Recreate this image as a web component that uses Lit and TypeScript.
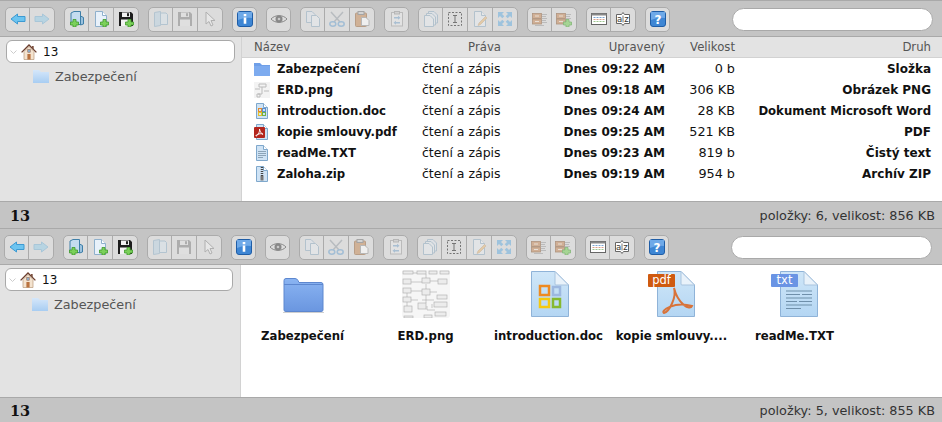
import { LitElement, html, svg, css, TemplateResult } from 'lit'
import { customElement, property } from 'lit/decorators.js'

const page = (fill = '#e8f1fa', line = '#8fb0cc') => svg`
  <path d="M2.500 .5H9.500L13.500 4.500V15.500H2.500Z" fill=${fill} stroke=${line} />
  <path d="M9.500 .5V4.500H13.500" fill="#fff" stroke=${line} />
`
const plus = svg`
  <path d="M10 8.500h3v2.500h2.500v3H13v2h-3v-2H7.500v-3H10Z" fill="#7bd05a" stroke="#3f9a2c" stroke-width=".8" />
`
const floppy = (body: string, label: string) => svg`
  <path d="M1 1H13L15 3V15H1Z" fill=${body} />
  <rect x="4" y="1.500" width="8" height="4.500" fill=${label} />
  <rect x="9" y="2.200" width="2" height="3" fill=${body} />
  <rect x="3" y="8.500" width="10" height="6.500" fill=${label} />
`
const cabinet = svg`
  <rect x=".5" y="2.500" width="9" height="5" fill="#c68a5b" stroke="#8a5a34" stroke-width=".8" />
  <rect x=".5" y="8" width="9" height="5" fill="#c68a5b" stroke="#8a5a34" stroke-width=".8" />
  <path d="M3 5h4M3 10.500h4" stroke="#f3e2d2" />
`

const toolIcons: Record<string, TemplateResult> = {
  back: svg`<path d="M1 8L7.500 3V5.500H15V10.500H7.500V13Z" fill="#6cc4f0" stroke="#3d9ad2" />`,
  forward: svg`<path d="M15 8L8.500 3V5.500H1V10.500H8.500V13Z" fill="#6cc4f0" stroke="#3d9ad2" />`,
  mkdir: svg`
    <path d="M2 2L5 .5H11.500V13.500H2Z" fill="#c4dcf0" stroke="#3f7fa8" />
    <path d="M11.500 5L14.500 6.500V13L11.500 14Z" fill="#9cc2de" stroke="#3f7fa8" />
    <g transform="translate(-6 0)">${plus}</g>
  `,
  mkfile: svg`${page()}${plus}`,
  save: svg`${floppy('#1d1d1d', '#f2f2f2')}${plus}`,
  open: svg`
    <path d="M1.500 1.500L7.500 .5V14.500L1.500 15.500Z" fill="#a8cce6" stroke="#5d92b8" />
    <path d="M7.500 2H13L14.500 3.500V13.500H7.500Z" fill="#d6e8f5" stroke="#5d92b8" />
  `,
  floppy: svg`${floppy('#4c4c4c', '#e8e8e8')}`,
  cursor: svg`<path d="M4 1V13L7 10.500L9 15L11 14L9 9.500H13Z" fill="#fff" stroke="#555" />`,
  info: svg`
    <rect x=".5" y=".5" width="15" height="15" rx="2.500" fill="#3e86d4" stroke="#1f5da6" />
    <path d="M1 1H15V7Q8 6 1 9Z" fill="#6ea9e8" />
    <path d="M6.700 3h2.600v2.200H6.700ZM6.700 6.400h2.600v6.400H6.700Z" fill="#fff" />
  `,
  eye: svg`
    <path d="M0 8C4 3.500 12 3.500 16 8 12 12.500 4 12.500 0 8Z" fill="#ddd" stroke="#444" />
    <circle cx="8" cy="8" r="3.500" fill="#444" />
    <circle cx="8" cy="8" r="1.300" fill="#bbb" />
  `,
  copy: svg`
    <path d="M1.500 .5H7L10 3.500V11.500H1.500Z" fill="#dfeaf4" stroke="#5f8bad" />
    <path d="M6.500 4.500H11.500L14.500 7.500V15.500H6.500Z" fill="#eef5fb" stroke="#5f8bad" />
  `,
  cut: svg`
    <path d="M2 1L11 11M14 1L5 11" stroke="#6d7a86" stroke-width="1.500" fill="none" />
    <ellipse cx="3.800" cy="13" rx="3" ry="2.200" fill="none" stroke="#2d80c6" stroke-width="1.500" />
    <ellipse cx="12.200" cy="13" rx="3" ry="2.200" fill="none" stroke="#2d80c6" stroke-width="1.500" />
  `,
  paste: svg`
    <rect x="1.500" y="2" width="11" height="13.500" rx="1" fill="#c68f5e" stroke="#9b6a41" />
    <rect x="4" y=".5" width="6" height="3" fill="#ccc" stroke="#777" />
    <path d="M7.500 6.500H12L15 9.500V14.500H7.500Z" fill="#fff" stroke="#999" />
  `,
  duplicate: svg`
    <rect x="2.500" y="1.500" width="11" height="13.500" fill="#eee" stroke="#777" />
    <rect x="5.500" y=".5" width="5" height="2.500" fill="#bbb" stroke="#666" />
    <path d="M5 6h4V4.800L11.500 6.800 9 8.800V7.600H5ZM11 11H7V9.800L4.500 11.800 7 13.800V12.600H11Z" fill="#3f82bd" />
  `,
  pages: svg`
    <path d="M5.500 .5H11L14.500 4V12H5.500Z" fill="#dfeaf4" stroke="#5f8bad" />
    <path d="M3.500 2.500H9L12.500 6V14H3.500Z" fill="#e8f1f8" stroke="#5f8bad" />
    <path d="M1.500 4.500H7L10.500 8V15.500H1.500Z" fill="#f0f6fb" stroke="#5f8bad" />
  `,
  rename: svg`
    <rect x="1.500" y="1.500" width="13" height="13" fill="none" stroke="#222" stroke-dasharray="2 1.500" />
    <path d="M6 4.500H10M6 11.500H10M8 4.500V11.500" stroke="#222" fill="none" />
  `,
  edit: svg`
    ${page('#eef5fb', '#5f8bad')}
    <path d="M6 14.500L7 12 13.500 5.500 15 7 8.500 13.500Z" fill="#f0a63a" stroke="#b77a35" stroke-width=".7" />
  `,
  resize: svg`
    <path d="M1 1H7L5 3 7.300 5.300 5.300 7.300 3 5 1 7ZM15 1V7L13 5 10.700 7.300 8.700 5.300 11 3 9 1ZM1 15V9L3 11 5.300 8.700 7.300 10.700 5 13 7 15ZM15 15H9L11 13 8.700 10.700 10.700 8.700 13 11 15 9Z" fill="#1f8fe0" />
  `,
  archive: svg`
    ${cabinet}
    <path d="M10 3.500h5M10 5.500h4M10 7.500h5M10 9.500h4M10 11.500h5M3 14.500h9" stroke="#999" stroke-width=".9" />
  `,
  extract: svg`
    ${cabinet}
    <path d="M10 3.500h5M10 5.500h4M10 7.500h5" stroke="#999" stroke-width=".9" />
    ${plus}
  `,
  view: svg`
    <rect x=".5" y="2.500" width="15" height="11" fill="#fff" stroke="#666" />
    <path d="M.5 2.500h15v2H.5Z" fill="#888" />
    <path d="M2.500 6.500h2M5.500 6.500h2M8.500 6.500h2M11.500 6.500h2" stroke="#7aa5d2" />
    <path d="M2.500 8.500h2M5.500 8.500h2M8.500 8.500h2M11.500 8.500h2" stroke="#d99f88" />
    <path d="M2.500 10.500h2M5.500 10.500h2M8.500 10.500h2M11.500 10.500h2" stroke="#9cc58e" />
  `,
  sort: svg`
    <path d="M1.500 3.500H6.500L8 1.500 9.500 3.500H14.500V12.500H9.500L8 14.500 6.500 12.500H1.500Z" fill="#fff" stroke="#666" />
    <text x="2" y="10.800" font-size="8.500" fill="#333" font-family="DejaVu Sans">a</text>
    <text x="9.300" y="10.800" font-size="8.500" fill="#333" font-family="DejaVu Sans">z</text>
    <path d="M8 4.500V11.500" stroke="#777" />
  `,
  help: svg`
    <rect x=".5" y=".5" width="15" height="15" rx="2.500" fill="#3e86d4" stroke="#1f5da6" />
    <path d="M1 1H15V7Q8 6 1 9Z" fill="#6ea9e8" />
    <text x="8" y="12.500" font-size="12" font-weight="700" fill="#fff" text-anchor="middle" font-family="DejaVu Sans">?</text>
  `,
}

type Tool = { icon: string; off?: boolean; faded?: boolean }

const toolGroups: Tool[][] = [
  [{ icon: 'back' }, { icon: 'forward', off: true }],
  [{ icon: 'mkdir' }, { icon: 'mkfile' }, { icon: 'save' }],
  [{ icon: 'open', off: true }, { icon: 'floppy', off: true }, { icon: 'cursor', off: true }],
  [{ icon: 'info' }],
  [{ icon: 'eye', faded: true }],
  [{ icon: 'copy', off: true }, { icon: 'cut', off: true }, { icon: 'paste', faded: true }],
  [{ icon: 'duplicate', off: true }],
  [{ icon: 'pages', off: true }, { icon: 'rename', faded: true }, { icon: 'edit', off: true }, { icon: 'resize', off: true }],
  [{ icon: 'archive', faded: true }, { icon: 'extract', faded: true }],
  [{ icon: 'view' }, { icon: 'sort' }],
  [{ icon: 'help' }],
]

const treeFolder = (id: string) => html`
  <svg class="tree-folder" viewBox="0 0 16 14">
    <defs>
      <linearGradient id=${id} x1="0" y1="0" x2="0" y2="1">
        <stop offset="0" stop-color="#d5e7fa" /><stop offset="1" stop-color="#a8cdf2" />
      </linearGradient>
    </defs>
    <path d="M0 1H6L8 3H16V14H0Z" fill="url(#${id})" />
  </svg>
`

const homeIcon = html`
  <svg class="home" viewBox="0 0 16 16">
    <path d="M3 7.500V15.500H13V7.500L8 2.500Z" fill="#f4e3cf" stroke="#b99a7a" stroke-width=".7" />
    <path d="M.6 8.400L8 1 15.400 8.400" fill="none" stroke="#6b3d2c" stroke-width="1.300" />
    <path d="M11 2V4.500L12.700 6V2Z" fill="#7c5241" />
    <rect x="6.400" y="10" width="3.200" height="5.500" fill="#b9723f" />
    <rect x="6.800" y="5.600" width="2.400" height="2.600" fill="#8fb0cc" stroke="#7c5241" stroke-width=".5" />
  </svg>
`

const fileIcons: Record<string, TemplateResult> = {
  folder: html`
    <svg class="file" viewBox="0 0 16 16">
      <path d="M0 2H6L8 4H16V15H0Z" fill="#6f9fe8" />
      <path d="M0 5H16V15H0Z" fill="#7dabef" />
    </svg>
  `,
  png: html`
    <svg class="file" viewBox="0 0 16 16">
      <rect width="16" height="16" fill="#f3f3f3" />
      <path d="M5 2h7v3H5ZM1 7h5M8 5v7H4M3 12h3v3H3ZM10 9h5" stroke="#bbb" fill="none" />
    </svg>
  `,
  doc: html`
    <svg class="file" viewBox="0 0 16 16">
      ${page('#cfe3f5', '#7fa8cc')}
      <rect x="4.500" y="5.500" width="3" height="3" fill="none" stroke="#e58a2b" />
      <rect x="8.500" y="5.500" width="3" height="3" fill="none" stroke="#5b8fd0" />
      <rect x="4.500" y="9.500" width="3" height="3" fill="none" stroke="#e4c12c" />
      <rect x="8.500" y="9.500" width="3" height="3" fill="none" stroke="#6eb04a" />
    </svg>
  `,
  pdf: html`
    <svg class="file" viewBox="0 0 16 16">
      ${page('#cfe3f5', '#7fa8cc')}
      <rect x="0" y="3" width="11" height="11" rx="1" fill="#b3261e" />
      <path d="M5.500 5C6 8 3.500 12 2 12 1.500 11 5 9 9 10 9 11 6 8.500 5.500 5Z" fill="none" stroke="#fff" />
    </svg>
  `,
  txt: html`
    <svg class="file" viewBox="0 0 16 16">
      ${page('#cfe3f5', '#7fa8cc')}
      <path d="M4 6.500h8M4 8.500h8M4 10.500h8M4 12.500h5" stroke="#8ca4b8" />
    </svg>
  `,
  zip: html`
    <svg class="file" viewBox="0 0 16 16">
      ${page('#cfe3f5', '#7fa8cc')}
      <path d="M8 1v10" stroke="#444" stroke-width="2.500" stroke-dasharray="1 1" />
      <rect x="6.500" y="10" width="3" height="4.500" fill="#777" />
    </svg>
  `,
}

const erdBoxes = [
  [1, 1, 10, 3], [15, 1, 9, 3], [27, 1, 8, 3], [38, 1, 9, 3],
  [1, 9, 8, 5], [20, 8, 8, 5], [36, 9, 9, 5], [1, 18, 8, 5],
  [20, 19, 8, 6], [1, 27, 8, 5], [35, 25, 10, 4], [32, 32, 13, 5],
  [16, 33, 8, 6], [2, 36, 8, 6], [33, 42, 11, 4], [2, 46, 9, 2], [22, 45, 8, 3],
]

const docBase = (dx: number, id: string) => svg`
  <defs>
    <linearGradient id=${id} x1="0" y1="0" x2="0" y2="1">
      <stop offset="0" stop-color="#cfe6f8" /><stop offset="1" stop-color="#b4d6f3" />
    </linearGradient>
  </defs>
  <g transform="translate(${dx} 0)">
    <path d="M.5 1.500H24L37.500 15V46.500H.5Z" fill="url(#${id})" stroke="#8fb3d8" />
    <path d="M24 1.500L37.500 15H25Q24 15 24 14Z" fill="#e9f2fa" stroke="#a9c4de" />
  </g>
`

const largeIcons: Record<string, TemplateResult> = {
  folder: html`
    <svg class="thumb" viewBox="0 0 48 48">
      <defs>
        <linearGradient id="lf" x1="0" y1="0" x2="0" y2="1">
          <stop offset="0" stop-color="#8ab4f2" /><stop offset="1" stop-color="#6a96e0" />
        </linearGradient>
      </defs>
      <path d="M5 10.500Q5 8.500 7 8.500H16Q18 8.500 19 10.500L20 12.500H42Q44 12.500 44 14.500V40Q44 41.500 42 41.500H7Q5 41.500 5 40Z" fill="url(#lf)" stroke="#5d87cf" />
      <path d="M5 14.500H44" stroke="#5d87cf" />
      <path d="M4 42.500H45" stroke="#cfcfcf" />
    </svg>
  `,
  png: html`
    <svg class="thumb" viewBox="0 0 48 48">
      <rect width="48" height="48" rx="3" fill="#f6f6f6" />
      <path d="M11 3H15M24 13V4M24 14V19M9 12H20M9 21H20M28 11H36M24 25V33M28 22H35M5 23V27M5 32V36M9 30H16M25 36V40H33M20 30H32M30 38V34" stroke="#999" stroke-width=".5" fill="none" />
      ${erdBoxes.map(([x, y, w, h]) => svg`
        <rect x=${x} y=${y} width=${w} height=${h} fill="#ececec" stroke="#aaa" stroke-width=".6" />
      `)}
    </svg>
  `,
  doc: html`
    <svg class="thumb" viewBox="0 0 48 48">
      ${docBase(6, 'ld')}
      <rect x="15" y="16" width="9" height="9" fill="none" stroke="#ee8a21" stroke-width="2.500" />
      <rect x="28" y="17" width="7" height="8" fill="none" stroke="#9db8e0" stroke-width="2.500" />
      <rect x="15" y="29" width="9" height="8" fill="none" stroke="#f5c90f" stroke-width="2.500" />
      <rect x="28" y="29" width="7" height="8" fill="none" stroke="#86b92f" stroke-width="2.500" />
    </svg>
  `,
  pdf: html`
    <svg class="thumb" viewBox="0 0 48 48">
      ${docBase(9, 'lp')}
      <rect y="4" width="27" height="13" rx="1" fill="#cf5a10" />
      <text class="badge" x="13.500" y="14" text-anchor="middle">pdf</text>
      <path d="M26 18C29 27 21 42 16 43 12 41 26 31 44 36 42 41 30 34 26 18Z" fill="none" stroke="#d8733a" stroke-width="2" />
    </svg>
  `,
  txt: html`
    <svg class="thumb" viewBox="0 0 48 48">
      ${docBase(9, 'lt')}
      <rect y="4" width="27" height="13" rx="1" fill="#6a94e4" />
      <text class="badge" x="13.500" y="14" text-anchor="middle">txt</text>
      <path d="M15 21H41M15 24.500H29M31 24.500H41M15 28H41M15 31.500H26M28 31.500H41M15 35H41M15 38.500H30" stroke="#6f8faa" stroke-width="1.200" />
    </svg>
  `,
}

type FileRow = { icon: string; name: string; date: string; size: string; kind: string }

const rows: FileRow[] = [
  { icon: 'folder', name: 'Zabezpečení', date: 'Dnes 09:22 AM', size: '0 b', kind: 'Složka' },
  { icon: 'png', name: 'ERD.png', date: 'Dnes 09:18 AM', size: '306 KB', kind: 'Obrázek PNG' },
  { icon: 'doc', name: 'introduction.doc', date: 'Dnes 09:24 AM', size: '28 KB', kind: 'Dokument Microsoft Word' },
  { icon: 'pdf', name: 'kopie smlouvy.pdf', date: 'Dnes 09:25 AM', size: '521 KB', kind: 'PDF' },
  { icon: 'txt', name: 'readMe.TXT', date: 'Dnes 09:23 AM', size: '819 b', kind: 'Čistý text' },
  { icon: 'zip', name: 'Zaloha.zip', date: 'Dnes 09:19 AM', size: '954 b', kind: 'Archív ZIP' },
]

const tiles = [
  { icon: 'folder', name: 'Zabezpečení' },
  { icon: 'png', name: 'ERD.png' },
  { icon: 'doc', name: 'introduction.doc' },
  { icon: 'pdf', name: 'kopie smlouvy....' },
  { icon: 'txt', name: 'readMe.TXT' },
]

@customElement('fm-toolbar')
export class FmToolbar extends LitElement {
  static styles = css`
    :host {
      display: flex;
      align-items: center;
      gap: 9px;
      height: 37px;
      box-sizing: border-box;
      padding: 1px 9px 0 5px;
      background: #c4c4c4;
      border-top: 1px solid #a9a9a9;
      border-bottom: 1px solid #a9a9a9;
    }
    .group {
      display: flex;
      height: 25px;
      box-sizing: border-box;
      border: 1px solid #ababab;
      border-radius: 5px;
      background: #dcdcdc;
      overflow: hidden;
    }
    .tool {
      display: flex;
      align-items: center;
      justify-content: center;
      width: 24px;
      border-left: 1px solid #ababab;
    }
    .tool:first-child {
      width: 23px;
      border-left: 0;
    }
    .tool svg {
      width: 16px;
      height: 16px;
    }
    .off svg {
      opacity: 0.32;
    }
    .faded svg {
      opacity: 0.55;
    }
    .search {
      flex: none;
      width: 201px;
      height: 23px;
      box-sizing: border-box;
      margin-left: auto;
      border: 1px solid #a9a9a9;
      border-radius: 12px;
      background: #fff;
    }
  `

  render() {
    return html`
      ${toolGroups.map(group => html`
        <div class="group">
          ${group.map(tool => html`
            <div class="tool ${tool.off ? 'off' : ''} ${tool.faded ? 'faded' : ''}">
              <svg viewBox="0 0 16 16">${toolIcons[tool.icon]}</svg>
            </div>
          `)}
        </div>
      `)}
      <div class="search"></div>
    `
  }
}

@customElement('fm-panel')
export class FmPanel extends LitElement {
  @property({ reflect: true }) view = 'list'
  @property() status = ''

  static styles = css`
    :host {
      display: flex;
      flex-direction: column;
      font-family: 'DejaVu Sans', Verdana, sans-serif;
      font-size: 12px;
      color: #111;
    }
    .body {
      flex: 1;
      display: flex;
      min-height: 0;
    }
    .tree {
      flex: none;
      width: 242px;
      box-sizing: border-box;
      padding: 3px 6px 0 6px;
      background: #e3e3e3;
      border-right: 1px solid #d2d2d2;
    }
    .root {
      display: flex;
      align-items: center;
      height: 23px;
      box-sizing: border-box;
      padding-left: 3px;
      background: #fff;
      border: 1px solid #a9a9a9;
      border-radius: 6px;
    }
    .chevron {
      flex: none;
      width: 7px;
      height: 4px;
      margin-right: 4px;
    }
    .home {
      width: 16px;
      height: 16px;
      margin-right: 6px;
    }
    .sub {
      display: flex;
      align-items: center;
      height: 26px;
      padding-left: 27px;
      font-size: 12.800px;
      color: #555;
    }
    .tree-folder {
      width: 16px;
      height: 14px;
      margin-right: 6px;
    }
    .main {
      flex: 1;
      min-width: 0;
      background: #fff;
    }
    .row {
      display: grid;
      grid-template-columns: 168px 79px 164px 70px 196px;
      padding: 0 11px 0 12px;
      align-items: center;
      height: 21px;
      white-space: nowrap;
    }
    .row > :nth-child(n + 3),
    .head > :nth-child(2) {
      text-align: right;
    }
    .head {
      height: 20px;
      background: #e3e3e3;
      border-bottom: 1px solid #d2d2d2;
      font-size: 11.700px;
      color: #555;
    }
    .rights {
      font-size: 12.500px;
    }
    .size {
      font-size: 12.800px;
    }
    .b {
      font-weight: 700;
    }
    .tight {
      font-size: 11.700px;
    }
    .name {
      display: flex;
      align-items: center;
      font-size: 11.700px;
      font-weight: 700;
    }
    .file {
      flex: none;
      width: 16px;
      height: 16px;
      margin-right: 7px;
    }
    .tiles {
      display: flex;
    }
    .tile {
      display: flex;
      flex-direction: column;
      align-items: center;
      width: 123px;
      padding-top: 5px;
      font-size: 11.700px;
      font-weight: 700;
      white-space: nowrap;
    }
    .thumb {
      width: 48px;
      height: 48px;
      margin-bottom: 11px;
    }
    .badge {
      font-size: 11.500px;
      font-weight: 400;
      fill: #fff;
    }
    .status {
      display: flex;
      align-items: center;
      justify-content: space-between;
      flex: none;
      box-sizing: border-box;
      padding: 0 7px 0 10px;
      background: #c4c4c4;
      border-top: 1px solid #a9a9a9;
      font-size: 12.800px;
      color: #333;
    }
    .title {
      font-family: 'DejaVu Serif', serif;
      font-size: 14.500px;
      font-weight: 700;
      color: #111;
    }
    :host([view='list']) .status {
      height: 27px;
    }
    :host([view='tiles']) .status {
      height: 25px;
    }
    :host([view='tiles']) .tree {
      width: 241px;
      padding: 3px 7px 0 5px;
    }
    :host([view='tiles']) fm-toolbar {
      padding-left: 4px;
      padding-right: 10px;
    }
  `

  private renderList() {
    return html`
      <div class="row head">
        <span>Název</span><span>Práva</span><span>Upravený</span><span>Velikost</span><span>Druh</span>
      </div>
      ${rows.map(row => html`
        <div class="row">
          <span class="name">${fileIcons[row.icon]}${row.name}</span>
          <span class="rights">čtení a zápis</span>
          <span class="b">${row.date}</span>
          <span class="size">${row.size}</span>
          <span class="b ${row.kind.length > 20 ? 'tight' : ''}">${row.kind}</span>
        </div>
      `)}
    `
  }

  private renderTiles() {
    return html`
      <div class="tiles">
        ${tiles.map(tile => html`
          <div class="tile">${largeIcons[tile.icon]}<span>${tile.name}</span></div>
        `)}
      </div>
    `
  }

  render() {
    return html`
      <fm-toolbar></fm-toolbar>
      <div class="body">
        <div class="tree">
          <div class="root">
            <svg class="chevron" viewBox="0 0 7 4"><path d="M.5 .5L3.500 3.500 6.500 .5" fill="none" stroke="#ccc" /></svg>
            ${homeIcon}<span>13</span>
          </div>
          <div class="sub">${treeFolder(`tf-${this.view}`)}<span>Zabezpečení</span></div>
        </div>
        <div class="main">
          ${this.view === 'list' ? this.renderList() : this.renderTiles()}
        </div>
      </div>
      <div class="status">
        <span class="title">13</span>
        <span>${this.status}</span>
      </div>
    `
  }
}

@customElement('app-root')
export class AppRoot extends LitElement {
  static styles = css`
    :host {
      display: block;
      width: 942px;
      height: 422px;
      overflow: hidden;
    }
    .first {
      height: 228px;
    }
    .second {
      height: 194px;
    }
  `

  render() {
    return html`
      <fm-panel class="first" view="list" status="položky: 6, velikost: 856 KB"></fm-panel>
      <fm-panel class="second" view="tiles" status="položky: 5, velikost: 855 KB"></fm-panel>
    `
  }
}
